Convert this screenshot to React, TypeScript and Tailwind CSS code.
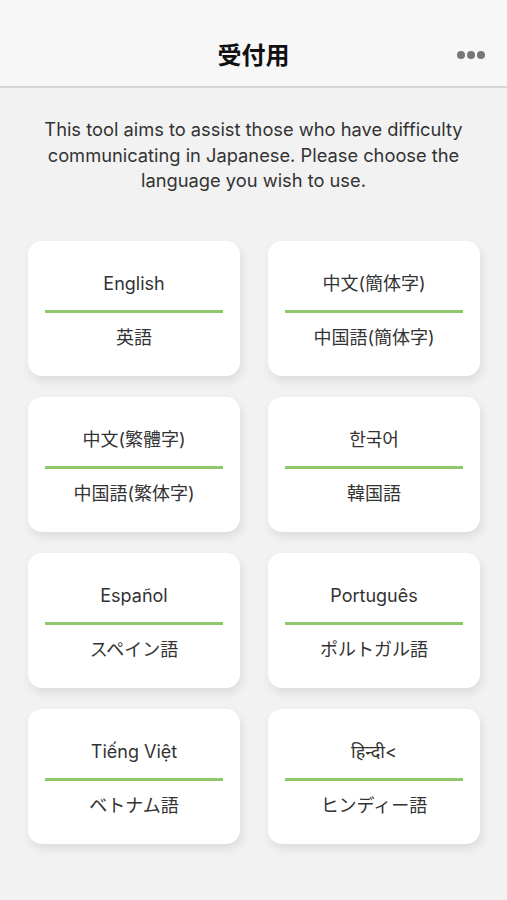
const languages = [
  { name: "English", ja: "英語" },
  { name: "中文(簡体字)", ja: "中国語(簡体字)" },
  { name: "中文(繁體字)", ja: "中国語(繁体字)" },
  { name: "한국어", ja: "韓国語" },
  { name: "Español", ja: "スペイン語" },
  { name: "Português", ja: "ポルトガル語" },
  { name: "Tiếng Việt", ja: "ベトナム語" },
  { name: "हिन्दी<", ja: "ヒンディー語" },
];

const font = {
  fontFamily:
    'Inter, "Noto Sans CJK JP", "Noto Sans CJK KR", "Noto Sans", sans-serif',
};

const LanguageCard = ({ name, ja }: { name: string; ja: string }) => {
  return (
    <button className="flex h-[135px] flex-col rounded-[14px] bg-white shadow-[2px_5px_10px_rgba(0,0,0,0.09)]">
      <p className="mt-[30px] mb-[13px] text-center text-[18px] leading-[26px] text-[#333]">
        {name}
      </p>
      <div className="mx-[17px] h-[3px] bg-[#90c769]" />
      <p className="mt-[12px] text-center text-[18px] leading-[26px] text-[#333]">
        {ja}
      </p>
    </button>
  );
};

export default function App() {
  return (
    <div className="min-h-[900px] w-full bg-[#f2f2f2]" style={font}>
      <header className="relative flex h-[88px] items-center justify-center border-b-2 border-[#d6d6d6] bg-[#f7f7f8] pt-[26px]">
        <h1 className="text-[24px] font-bold text-[#111]">受付用</h1>
        <div className="absolute right-[22px] top-[51px] flex gap-[2px]">
          <span className="h-[8px] w-[8px] rounded-full bg-[#777]" />
          <span className="h-[8px] w-[8px] rounded-full bg-[#777]" />
          <span className="h-[8px] w-[8px] rounded-full bg-[#777]" />
        </div>
      </header>

      <p className="px-[28px] pt-[29px] text-center text-[18.3px] leading-[25.5px] text-[#333]">
        This tool aims to assist those who have difficulty communicating in
        Japanese. Please choose the language you wish to use.
      </p>

      <div className="grid grid-cols-2 gap-x-[28px] gap-y-[21px] pl-[28px] pr-[27px] pt-[47px]">
        {languages.map((lang) => (
          <LanguageCard key={lang.name} name={lang.name} ja={lang.ja} />
        ))}
      </div>
    </div>
  );
}
